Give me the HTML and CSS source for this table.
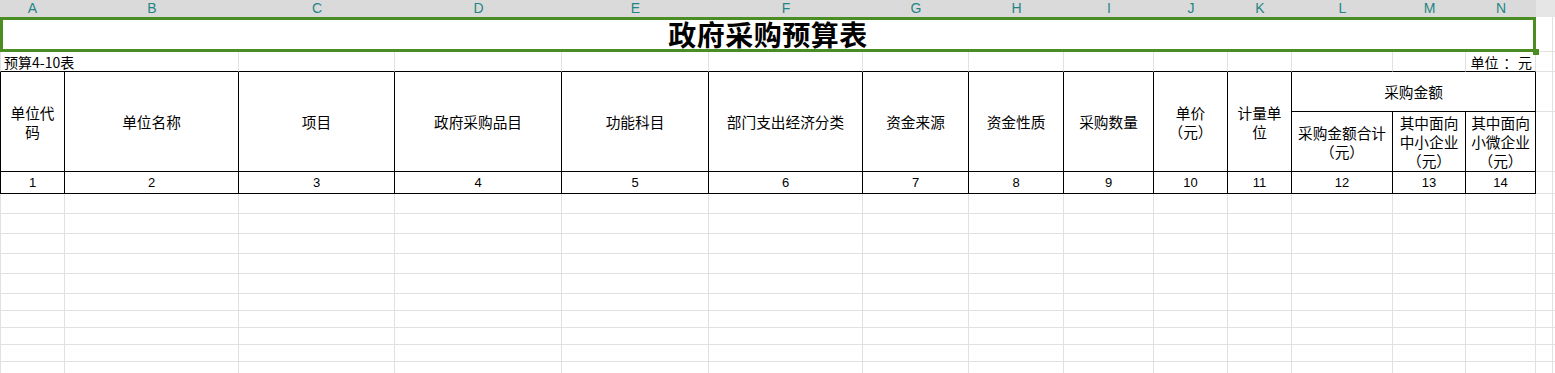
FILE: index.html
```html
<!DOCTYPE html>
<html lang="zh-CN">
<head>
<meta charset="utf-8">
<title>政府采购预算表</title>
<link rel="stylesheet" href="styles.css">
</head>
<body>
<div class="sheet">
  <div class="ch sel">A</div><div class="ch sel">B</div><div class="ch sel">C</div><div class="ch sel">D</div><div class="ch sel">E</div><div class="ch sel">F</div><div class="ch sel">G</div><div class="ch sel">H</div><div class="ch sel">I</div><div class="ch sel">J</div><div class="ch sel">K</div><div class="ch sel">L</div><div class="ch sel">M</div><div class="ch sel">N</div><div class="ch"></div><div class="ch"></div>

  <div class="title">政府采购预算表<span class="handle"></span></div><div class="c"></div><div class="c nb"></div>

  <div class="c first top span2 note">预算4-10表</div><div class="c top"></div><div class="c top"></div><div class="c top"></div><div class="c top"></div><div class="c top"></div><div class="c top"></div><div class="c top"></div><div class="c top"></div><div class="c top"></div><div class="c top"></div><div class="c top"></div><div class="c top unit"><span>单位<span class="colon">：</span>元</span></div><div class="c"></div><div class="c nb"></div>

  <div class="c t first tall hd">单位代<br>码</div>
  <div class="c t tall hd">单位名称</div>
  <div class="c t tall hd">项目</div>
  <div class="c t tall hd">政府采购品目</div>
  <div class="c t tall hd">功能科目</div>
  <div class="c t tall hd">部门支出经济分类</div>
  <div class="c t tall hd">资金来源</div>
  <div class="c t tall hd">资金性质</div>
  <div class="c t tall hd">采购数量</div>
  <div class="c t tall hd"><div>单价<br><span class="pl">（</span>元<span class="pr">）</span></div></div>
  <div class="c t tall hd">计量单<br>位</div>
  <div class="c t span3 hd">采购金额</div>
  <div class="c"></div><div class="c nb"></div>
  <div class="c t hd"><div>采购金额合计<br><span class="pl">（</span>元<span class="pr">）</span></div></div>
  <div class="c t hd"><div>其中面向<br>中小企业<br><span class="pl">（</span>元<span class="pr">）</span></div></div>
  <div class="c t hd"><div>其中面向<br>小微企业<br><span class="pl">（</span>元<span class="pr">）</span></div></div>
  <div class="c"></div><div class="c nb"></div>

  <div class="c t first num">1</div><div class="c t num">2</div><div class="c t num">3</div><div class="c t num">4</div><div class="c t num">5</div><div class="c t num">6</div><div class="c t num">7</div><div class="c t num">8</div><div class="c t num">9</div><div class="c t num">10</div><div class="c t num">11</div><div class="c t num">12</div><div class="c t num">13</div><div class="c t num">14</div><div class="c"></div><div class="c nb"></div>

  <div class="c first"></div><div class="c"></div><div class="c"></div><div class="c"></div><div class="c"></div><div class="c"></div><div class="c"></div><div class="c"></div><div class="c"></div><div class="c"></div><div class="c"></div><div class="c"></div><div class="c"></div><div class="c"></div><div class="c"></div><div class="c nb"></div>
  <div class="c first"></div><div class="c"></div><div class="c"></div><div class="c"></div><div class="c"></div><div class="c"></div><div class="c"></div><div class="c"></div><div class="c"></div><div class="c"></div><div class="c"></div><div class="c"></div><div class="c"></div><div class="c"></div><div class="c"></div><div class="c nb"></div>
  <div class="c first"></div><div class="c"></div><div class="c"></div><div class="c"></div><div class="c"></div><div class="c"></div><div class="c"></div><div class="c"></div><div class="c"></div><div class="c"></div><div class="c"></div><div class="c"></div><div class="c"></div><div class="c"></div><div class="c"></div><div class="c nb"></div>
  <div class="c first"></div><div class="c"></div><div class="c"></div><div class="c"></div><div class="c"></div><div class="c"></div><div class="c"></div><div class="c"></div><div class="c"></div><div class="c"></div><div class="c"></div><div class="c"></div><div class="c"></div><div class="c"></div><div class="c"></div><div class="c nb"></div>
  <div class="c first"></div><div class="c"></div><div class="c"></div><div class="c"></div><div class="c"></div><div class="c"></div><div class="c"></div><div class="c"></div><div class="c"></div><div class="c"></div><div class="c"></div><div class="c"></div><div class="c"></div><div class="c"></div><div class="c"></div><div class="c nb"></div>
  <div class="c first"></div><div class="c"></div><div class="c"></div><div class="c"></div><div class="c"></div><div class="c"></div><div class="c"></div><div class="c"></div><div class="c"></div><div class="c"></div><div class="c"></div><div class="c"></div><div class="c"></div><div class="c"></div><div class="c"></div><div class="c nb"></div>
  <div class="c first"></div><div class="c"></div><div class="c"></div><div class="c"></div><div class="c"></div><div class="c"></div><div class="c"></div><div class="c"></div><div class="c"></div><div class="c"></div><div class="c"></div><div class="c"></div><div class="c"></div><div class="c"></div><div class="c"></div><div class="c nb"></div>
  <div class="c first"></div><div class="c"></div><div class="c"></div><div class="c"></div><div class="c"></div><div class="c"></div><div class="c"></div><div class="c"></div><div class="c"></div><div class="c"></div><div class="c"></div><div class="c"></div><div class="c"></div><div class="c"></div><div class="c"></div><div class="c nb"></div>
  <div class="c first"></div><div class="c"></div><div class="c"></div><div class="c"></div><div class="c"></div><div class="c"></div><div class="c"></div><div class="c"></div><div class="c"></div><div class="c"></div><div class="c"></div><div class="c"></div><div class="c"></div><div class="c"></div><div class="c"></div><div class="c nb"></div>
  <div class="c first"></div><div class="c"></div><div class="c"></div><div class="c"></div><div class="c"></div><div class="c"></div><div class="c"></div><div class="c"></div><div class="c"></div><div class="c"></div><div class="c"></div><div class="c"></div><div class="c"></div><div class="c"></div><div class="c"></div><div class="c nb"></div>
</div>
</body>
</html>
```
FILE: styles.css
```css
* { box-sizing: border-box; }
html, body { margin: 0; padding: 0; background: #fff; }
body {
  font-family: "Noto Sans CJK SC", "Liberation Sans", sans-serif;
  color: #000;
  overflow: hidden;
}
.sheet {
  display: grid;
  grid-template-columns: 65px 174px 156px 167px 147px 154px 106px 95px 90px 74px 64px 101px 73px 70px 17px 1fr;
  grid-template-rows: 17px 35px 20px 40px 60px 22px repeat(5, 20px) repeat(5, 17px);
  width: 1555px;
}
.ch {
  background: #e6e6e6;
  color: #1f8585;
  font-family: "Liberation Sans", sans-serif;
  font-size: 14px;
  line-height: 17px;
  text-align: center;
}
.ch.sel { background: #dadada; }
.c {
  border-right: 1px solid #e1e1e1;
  border-bottom: 1px solid #e1e1e1;
  font-size: 14.67px;
  line-height: 19px;
}
.c.nb { border-right: none; }
.c.first { border-left: 1px solid #e1e1e1; }
.c.top { border-bottom-color: #000; }
.c.t { border-right-color: #000; border-bottom-color: #000; }
.c.t.first { border-left-color: #000; }
.span2 { grid-column: span 2; }
.span3 { grid-column: span 3; }
.tall { grid-row: span 2; }
.title {
  grid-column: span 14;
  position: relative;
  border: 3px solid #4a8e23;
  font-size: 28px;
  font-weight: bold;
  line-height: 29px;
  text-align: center;
  letter-spacing: 0.5px;
}
.handle {
  position: absolute;
  right: -6px;
  bottom: -6px;
  width: 6px;
  height: 6px;
  background: #4a8e23;
}
.note {
  font-size: 14px;
  line-height: 18px;
  padding-left: 3px;
  display: flex;
  align-items: flex-end;
}
.unit {
  font-size: 14px;
  line-height: 18px;
  padding-right: 3px;
  display: flex;
  align-items: flex-end;
  justify-content: flex-end;
}
.colon {
  display: inline-block;
  width: 1.4em;
  padding-left: 0.35em;
  text-align: left;
}
.pl, .pr {
  display: inline-block;
  width: 1em;
}
.pl { text-align: center; }
.pr { text-align: center; }
.hd {
  display: flex;
  align-items: center;
  justify-content: center;
  text-align: center;
}
.num {
  display: flex;
  align-items: center;
  justify-content: center;
  font-family: "Liberation Sans", sans-serif;
  font-size: 13px;
}
```
